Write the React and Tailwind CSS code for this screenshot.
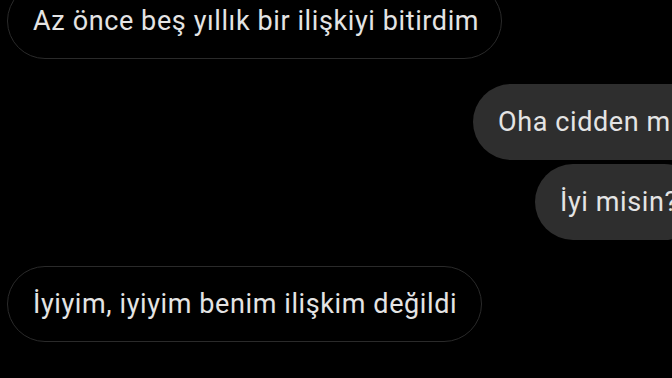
const Bubble = ({ children, mine, className = "" }) => (
  <div
    className={`h-[76px] shrink-0 flex items-center rounded-full whitespace-nowrap text-[27px] tracking-[0.6px] text-[#e4e4e4] ${
      mine ? "bg-[#2e2e2e] pl-[25px] pr-6" : "border-[1.5px] border-[#2a2a2a] px-[25px]"
    } ${className}`}
  >
    {children}
  </div>
);

const App = () => {
  return (
    <div
      className="w-[672px] h-[378px] bg-black overflow-hidden"
      style={{ fontFamily: "Roboto, 'Noto Sans', sans-serif" }}
    >
      <div className="flex flex-col items-start pl-[7px] -mt-[17px]">
        <Bubble className="w-[495px]">Az önce beş yıllık bir ilişkiyi bitirdim</Bubble>
        <Bubble mine className="ml-[466px] mt-[25px]">Oha cidden mi?</Bubble>
        <Bubble mine className="ml-[528px] mt-[4px] h-[74px]">İyi misin?</Bubble>
        <Bubble className="w-[475px] mt-[26px] h-[75px]">İyiyim, iyiyim benim ilişkim değildi</Bubble>
      </div>
    </div>
  );
};

export default App;
